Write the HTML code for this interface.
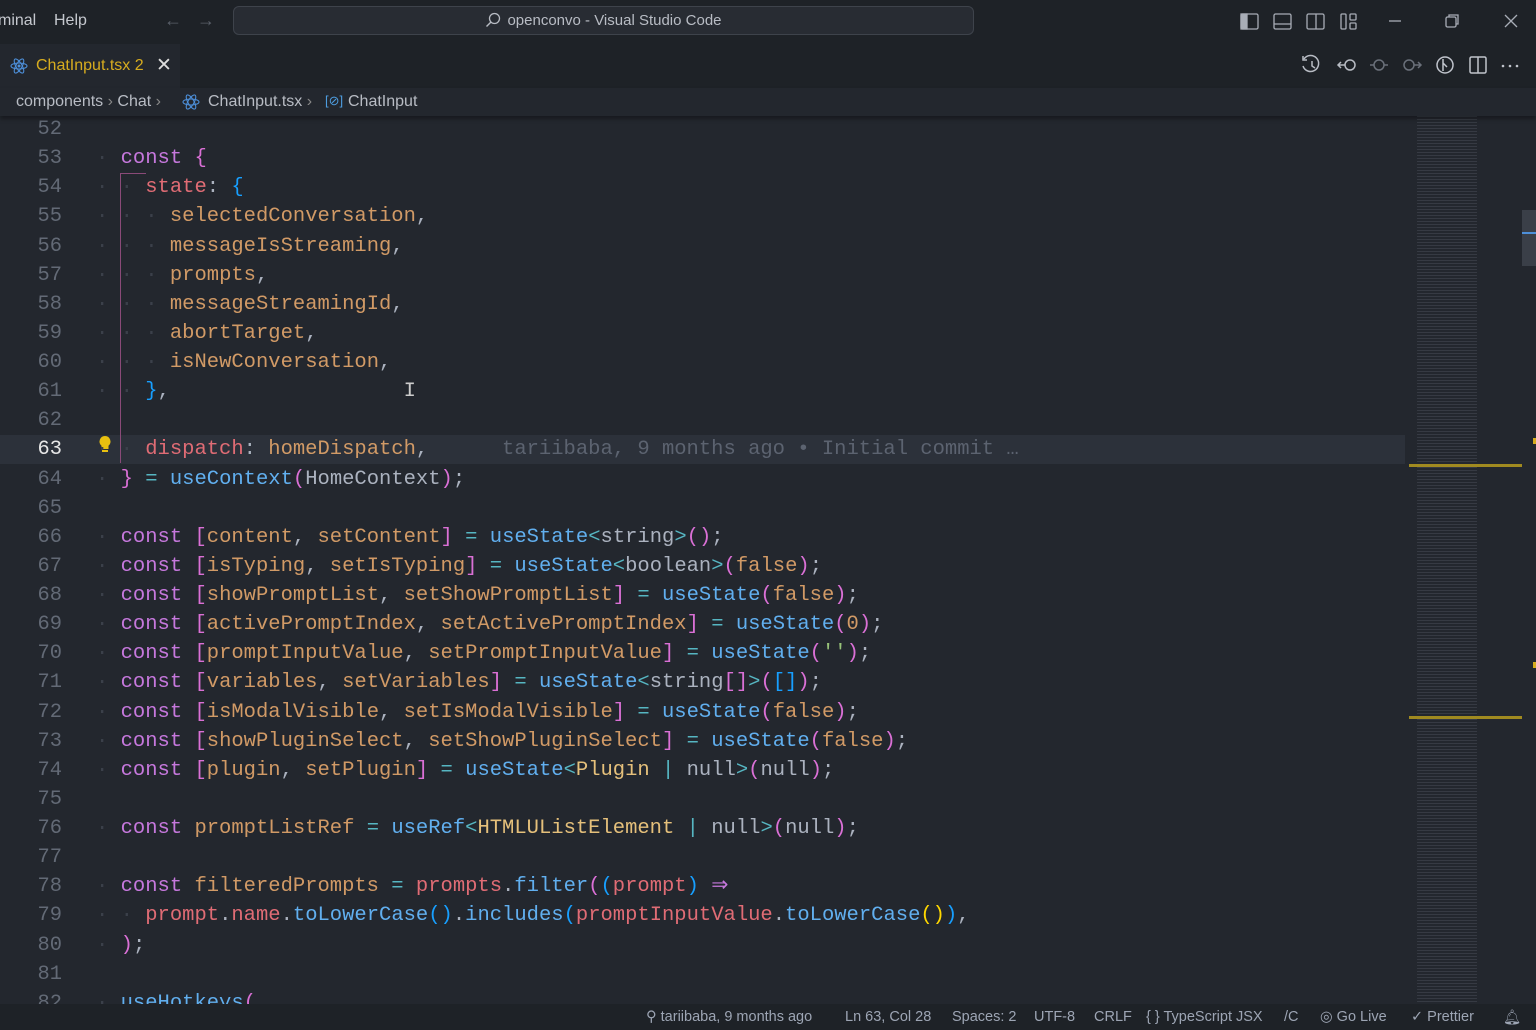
<!DOCTYPE html>
<html><head><meta charset="utf-8"><style>
*{margin:0;padding:0;box-sizing:border-box}
body{width:1536px;height:1030px;overflow:hidden;background:#23272e;font-family:"Liberation Sans",sans-serif;position:relative}
.title{position:absolute;left:0;top:0;width:1536px;height:44px;background:#1e2227;color:#c5c8ce;font-size:16px}
.title span{position:absolute;top:12px}
.cmd{position:absolute;left:233px;top:6px;width:741px;height:29px;background:#282c33;border:1px solid #3e434b;border-radius:6px;color:#b8bcc4;font-size:15px;text-align:center;line-height:27px}
.tabs{position:absolute;left:0;top:44px;width:1536px;height:44px;background:#1e2227}
.tab{position:absolute;left:0;top:0;width:180px;height:44px;background:#23272e;color:#d7ac1f;font-size:16px}
.crumb{position:absolute;left:0;top:88px;width:1536px;height:28px;background:#23272e;color:#b8bcc4;font-size:16px;box-shadow:0 3px 4px rgba(0,0,0,.35);z-index:3}
.ed{position:absolute;left:0;top:116px;width:1405px;height:888px;overflow:hidden}
.ln{position:absolute;left:0;width:62px;text-align:right;color:#636a76;font-family:"Liberation Mono",monospace;font-size:20.4px}
.code{position:absolute;left:96px;font-family:"Liberation Mono",monospace;font-size:20.5px;color:#abb2bf}
.row{height:29.14px;line-height:29.14px;position:relative;white-space:pre}
.k{color:#c678dd}.v{color:#d19a66}.p{color:#e06c75}.f{color:#61afef}.o{color:#56b6c2}.y{color:#e5c07b}.g{color:#98c379}
.b1{color:#da70d6}.b2{color:#179fff}.b3{color:#ffd700}.d{color:#3b404a}
.status{position:absolute;left:0;top:1004px;width:1536px;height:26px;background:#1e2227;color:#9da5b4;font-size:14.5px}
.status span{position:absolute;top:5px}
.mini{position:absolute;left:1405px;top:116px;width:117px;height:888px;background:#23272e;
background-image:repeating-linear-gradient(to bottom,rgba(150,160,175,.16) 0 1px,transparent 1px 3px);
background-size:60px 100%;background-repeat:no-repeat;background-position:12px 0}
</style></head><body>
<div class="title">
<span style="left:-2px">minal</span><span style="left:54px">Help</span>
<span style="left:164px;color:#5a606a;font-size:18px;top:10px">←</span><span style="left:197px;color:#5a606a;font-size:18px;top:10px">→</span>
<div class="cmd"><svg width="16" height="16" viewBox="0 0 16 16" style="vertical-align:-3px;margin-right:6px"><circle cx="9.5" cy="6.5" r="5" fill="none" stroke="#b8bcc4" stroke-width="1.3"/><path d="M6 10L1.5 14.5" stroke="#b8bcc4" stroke-width="1.4"/></svg>openconvo - Visual Studio Code</div>
<svg style="position:absolute;left:1240px;top:11px" width="300" height="22" viewBox="0 0 300 22">
<g fill="none" stroke="#a8adb6" stroke-width="1.3">
<rect x="1" y="3" width="17" height="15" rx="1.5"/><rect x="1" y="3" width="6" height="15" fill="#a8adb6"/>
<rect x="34" y="3" width="17" height="15" rx="1.5"/><path d="M34 13h17"/>
<rect x="67" y="3" width="17" height="15" rx="1.5"/><path d="M76 3v15"/>
<rect x="101" y="3" width="5" height="15" rx="1"/><rect x="110" y="3" width="6" height="6" rx="1"/><rect x="110" y="12" width="6" height="6" rx="1"/>
<path d="M149 10h12"/>
<rect x="206" y="6" width="10" height="10" rx="1.5"/><path d="M209 6V4h9v9h-2"/>
<path d="M265 4l12 12M277 4l-12 12"/></g></svg>
</div>
<div class="tabs">
<div class="tab"><svg style="position:absolute;left:10px;top:13px" width="18" height="18" viewBox="0 0 18 18"><g fill="none" stroke="#4d8fd9" stroke-width="1.1"><ellipse cx="9" cy="9" rx="8" ry="3"/><ellipse cx="9" cy="9" rx="8" ry="3" transform="rotate(60 9 9)"/><ellipse cx="9" cy="9" rx="8" ry="3" transform="rotate(120 9 9)"/></g><circle cx="9" cy="9" r="1.5" fill="#4d8fd9"/></svg>
<span style="position:absolute;left:36px;top:13px">ChatInput.tsx 2</span><span style="position:absolute;left:156px;top:10px;color:#ddd;font-size:19px">✕</span></div>
<svg style="position:absolute;left:1300px;top:9px" width="230" height="24" viewBox="0 0 230 24"><g fill="none" stroke-width="1.5">
<g stroke="#b8bcc4"><path d="M4 6a8 8 0 1 1-1 7"/><path d="M3 3v4h4"/><path d="M12 8v5l3 2"/></g>
<g stroke="#b8bcc4"><circle cx="50" cy="12" r="5"/><path d="M45 12h-7M41 9l-3 3 3 3"/></g>
<g stroke="#6a707a"><circle cx="79" cy="12" r="5"/><path d="M70 12h4M84 12h4"/></g>
<g stroke="#6a707a"><circle cx="109" cy="12" r="5"/><path d="M114 12h7M118 9l3 3-3 3"/></g>
<g stroke="#c0c4cc"><circle cx="145" cy="12" r="8"/><path d="M143 6v12M143 10l4 4"/></g>
<g stroke="#c0c4cc"><rect x="170" y="4" width="16" height="16" rx="1.5"/><path d="M178 4v16"/></g>
</g><g fill="#c0c4cc"><circle cx="203" cy="13" r="1.3"/><circle cx="210" cy="13" r="1.3"/><circle cx="217" cy="13" r="1.3"/></g></svg>
</div>
<div class="crumb"><span style="position:absolute;left:16px;top:5px">components <span style="color:#888">›</span> Chat <span style="color:#888">›</span></span>
<svg style="position:absolute;left:182px;top:5px" width="18" height="18" viewBox="0 0 18 18"><g fill="none" stroke="#4d8fd9" stroke-width="1.1"><ellipse cx="9" cy="9" rx="8" ry="3"/><ellipse cx="9" cy="9" rx="8" ry="3" transform="rotate(60 9 9)"/><ellipse cx="9" cy="9" rx="8" ry="3" transform="rotate(120 9 9)"/></g></svg>
<span style="position:absolute;left:208px;top:5px">ChatInput.tsx <span style="color:#888">›</span></span>
<span style="position:absolute;left:325px;top:5px;color:#4d9de0;font-size:13px">[⊘]</span>
<span style="position:absolute;left:348px;top:5px">ChatInput</span></div>

<div class="ed">
<div style="position:absolute;left:0;top:318.5px;width:1405px;height:29.14px;background:#2c313a"></div>
<div style="position:absolute;left:120px;top:57px;width:26px;height:1px;background:#8a4a78"></div>
<div style="position:absolute;left:120px;top:57px;width:1px;height:290px;background:#8a4a78"></div>
<svg style="position:absolute;left:97px;top:319px" width="16" height="20" viewBox="0 0 16 20"><path d="M8 1a5.5 5.5 0 0 0-3.5 9.7V14h7v-3.3A5.5 5.5 0 0 0 8 1z" fill="#e8c010"/><rect x="5" y="15" width="6" height="2" fill="#e8c010"/></svg>
<div class="ln" style="top:-1px">
<div class="row">52</div><div class="row">53</div><div class="row">54</div><div class="row">55</div><div class="row">56</div><div class="row">57</div><div class="row">58</div><div class="row">59</div><div class="row">60</div><div class="row">61</div><div class="row">62</div><div class="row" style="color:#e6e6e6">63</div><div class="row">64</div><div class="row">65</div><div class="row">66</div><div class="row">67</div><div class="row">68</div><div class="row">69</div><div class="row">70</div><div class="row">71</div><div class="row">72</div><div class="row">73</div><div class="row">74</div><div class="row">75</div><div class="row">76</div><div class="row">77</div><div class="row">78</div><div class="row">79</div><div class="row">80</div><div class="row">81</div><div class="row">82</div>
</div>
<div class="code" style="top:-1px">
<div class="row"> </div>
<div class="row"><span class="d">·</span> <span class="k">const</span> <span class="b1">{</span></div>
<div class="row"><span class="d">·</span> <span class="d">·</span> <span class="p">state</span>: <span class="b2">{</span></div>
<div class="row"><span class="d">·</span> <span class="d">·</span> <span class="d">·</span> <span class="v">selectedConversation</span>,</div>
<div class="row"><span class="d">·</span> <span class="d">·</span> <span class="d">·</span> <span class="v">messageIsStreaming</span>,</div>
<div class="row"><span class="d">·</span> <span class="d">·</span> <span class="d">·</span> <span class="v">prompts</span>,</div>
<div class="row"><span class="d">·</span> <span class="d">·</span> <span class="d">·</span> <span class="v">messageStreamingId</span>,</div>
<div class="row"><span class="d">·</span> <span class="d">·</span> <span class="d">·</span> <span class="v">abortTarget</span>,</div>
<div class="row"><span class="d">·</span> <span class="d">·</span> <span class="d">·</span> <span class="v">isNewConversation</span>,</div>
<div class="row"><span class="d">·</span> <span class="d">·</span> <span class="b2">}</span>,                   <span style="color:#ccc">I</span></div>
<div class="row"> </div>
<div class="row"><span class="d">·</span> <span class="d">·</span> <span class="p">dispatch</span>: <span class="v">homeDispatch</span>,      <span style="color:#5c6370">tariibaba, 9 months ago • Initial commit …</span></div>
<div class="row"><span class="d">·</span> <span class="b1">}</span> <span class="o">=</span> <span class="f">useContext</span><span class="b1">(</span>HomeContext<span class="b1">)</span>;</div>
<div class="row"> </div>
<div class="row"><span class="d">·</span> <span class="k">const</span> <span class="b1">[</span><span class="v">content</span>, <span class="v">setContent</span><span class="b1">]</span> <span class="o">=</span> <span class="f">useState</span><span class="o">&lt;</span>string<span class="o">&gt;</span><span class="b1">()</span>;</div>
<div class="row"><span class="d">·</span> <span class="k">const</span> <span class="b1">[</span><span class="v">isTyping</span>, <span class="v">setIsTyping</span><span class="b1">]</span> <span class="o">=</span> <span class="f">useState</span><span class="o">&lt;</span>boolean<span class="o">&gt;</span><span class="b1">(</span><span class="v">false</span><span class="b1">)</span>;</div>
<div class="row"><span class="d">·</span> <span class="k">const</span> <span class="b1">[</span><span class="v">showPromptList</span>, <span class="v">setShowPromptList</span><span class="b1">]</span> <span class="o">=</span> <span class="f">useState</span><span class="b1">(</span><span class="v">false</span><span class="b1">)</span>;</div>
<div class="row"><span class="d">·</span> <span class="k">const</span> <span class="b1">[</span><span class="v">activePromptIndex</span>, <span class="v">setActivePromptIndex</span><span class="b1">]</span> <span class="o">=</span> <span class="f">useState</span><span class="b1">(</span><span class="v">0</span><span class="b1">)</span>;</div>
<div class="row"><span class="d">·</span> <span class="k">const</span> <span class="b1">[</span><span class="v">promptInputValue</span>, <span class="v">setPromptInputValue</span><span class="b1">]</span> <span class="o">=</span> <span class="f">useState</span><span class="b1">(</span><span class="g">''</span><span class="b1">)</span>;</div>
<div class="row"><span class="d">·</span> <span class="k">const</span> <span class="b1">[</span><span class="v">variables</span>, <span class="v">setVariables</span><span class="b1">]</span> <span class="o">=</span> <span class="f">useState</span><span class="o">&lt;</span>string<span class="b1">[]</span><span class="o">&gt;</span><span class="b1">(</span><span class="b2">[]</span><span class="b1">)</span>;</div>
<div class="row"><span class="d">·</span> <span class="k">const</span> <span class="b1">[</span><span class="v">isModalVisible</span>, <span class="v">setIsModalVisible</span><span class="b1">]</span> <span class="o">=</span> <span class="f">useState</span><span class="b1">(</span><span class="v">false</span><span class="b1">)</span>;</div>
<div class="row"><span class="d">·</span> <span class="k">const</span> <span class="b1">[</span><span class="v">showPluginSelect</span>, <span class="v">setShowPluginSelect</span><span class="b1">]</span> <span class="o">=</span> <span class="f">useState</span><span class="b1">(</span><span class="v">false</span><span class="b1">)</span>;</div>
<div class="row"><span class="d">·</span> <span class="k">const</span> <span class="b1">[</span><span class="v">plugin</span>, <span class="v">setPlugin</span><span class="b1">]</span> <span class="o">=</span> <span class="f">useState</span><span class="o">&lt;</span><span class="y">Plugin</span> <span class="o">|</span> null<span class="o">&gt;</span><span class="b1">(</span>null<span class="b1">)</span>;</div>
<div class="row"> </div>
<div class="row"><span class="d">·</span> <span class="k">const</span> <span class="v">promptListRef</span> <span class="o">=</span> <span class="f">useRef</span><span class="o">&lt;</span><span class="y">HTMLUListElement</span> <span class="o">|</span> null<span class="o">&gt;</span><span class="b1">(</span>null<span class="b1">)</span>;</div>
<div class="row"> </div>
<div class="row"><span class="d">·</span> <span class="k">const</span> <span class="v">filteredPrompts</span> <span class="o">=</span> <span class="p">prompts</span>.<span class="f">filter</span><span class="b1">(</span><span class="b2">(</span><span class="p">prompt</span><span class="b2">)</span> <span class="k">⇒</span></div>
<div class="row"><span class="d">·</span> <span class="d">·</span> <span class="p">prompt</span>.<span class="p">name</span>.<span class="f">toLowerCase</span><span class="b2">()</span>.<span class="f">includes</span><span class="b2">(</span><span class="p">promptInputValue</span>.<span class="f">toLowerCase</span><span class="b3">()</span><span class="b2">)</span>,</div>
<div class="row"><span class="d">·</span> <span class="b1">)</span>;</div>
<div class="row"> </div>
<div class="row"><span class="d">·</span> <span class="f">useHotkeys</span><span class="b1">(</span></div>
</div>
</div>

<div class="mini"></div>
<div style="position:absolute;left:1409px;top:464px;width:113px;height:3px;background:#a08a20"></div>
<div style="position:absolute;left:1409px;top:716px;width:113px;height:3px;background:#a08a20"></div>
<div style="position:absolute;left:1522px;top:116px;width:14px;height:888px;background:#23272e"></div>
<div style="position:absolute;left:1522px;top:210px;width:14px;height:56px;background:#3a3f48"></div>
<div style="position:absolute;left:1522px;top:232px;width:14px;height:2px;background:#4d8fd9"></div>
<div style="position:absolute;left:1533px;top:438px;width:3px;height:6px;background:#d7ac1f"></div>
<div style="position:absolute;left:1533px;top:662px;width:3px;height:6px;background:#d7ac1f"></div>

<div class="status">
<span style="left:646px">⚲ tariibaba, 9 months ago</span>
<span style="left:845px">Ln 63, Col 28</span>
<span style="left:952px">Spaces: 2</span>
<span style="left:1034px">UTF-8</span>
<span style="left:1094px">CRLF</span>
<span style="left:1146px">{ } TypeScript JSX</span>
<span style="left:1284px">/C</span>
<span style="left:1320px">◎ Go Live</span>
<span style="left:1411px">✓ Prettier</span>
<span style="left:1503px">🔔︎</span>
</div>
</body></html>
